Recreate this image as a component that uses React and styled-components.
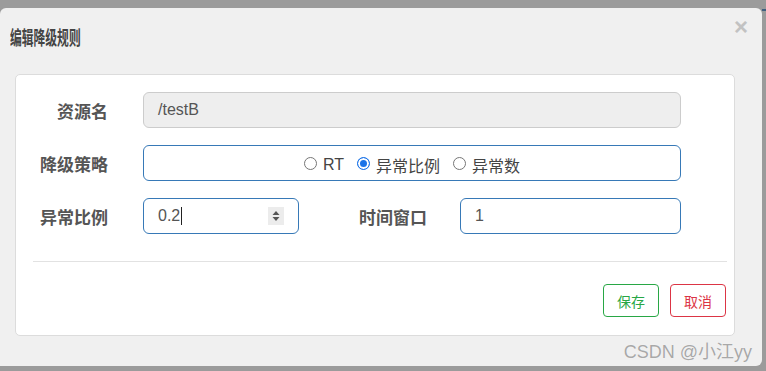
import styled, { createGlobalStyle } from 'styled-components'

const GlobalStyle = createGlobalStyle`
  html, body {
    margin: 0;
    padding: 0;
    background: #9b9b9b;
    overflow: hidden;
    font-family: "Liberation Sans", "Noto Sans CJK SC", sans-serif;
  }
`

const Page = styled.div`
  width: 766px;
  height: 371px;
  padding-top: 8px;
  box-sizing: border-box;
  position: relative;
`

const EdgeLine = styled.div`
  position: absolute;
  right: 0;
  top: 9px;
  width: 4px;
  height: 2px;
  background: #3f5f7f;
`

const Dialog = styled.div`
  width: 762px;
  height: 358px;
  background: #f0f0f0;
  border-radius: 6px 6px 6px 0;
  display: flex;
  flex-direction: column;
  box-sizing: border-box;
`

const Header = styled.div`
  height: 66px;
  display: flex;
  justify-content: space-between;
  align-items: flex-start;
  padding: 18px 14px 0 10px;
  box-sizing: border-box;
`

const Title = styled.h4`
  margin: 0;
  font-size: 19px;
  line-height: 22px;
  font-weight: bold;
  color: #444;
  font-family: "Noto Sans CJK SC", sans-serif;
  transform: scaleX(0.62);
  transform-origin: left center;
  white-space: nowrap;
`

const Close = styled.span`
  margin-top: -11px;
  font-size: 24px;
  line-height: 24px;
  font-weight: bold;
  color: #c2c2c2;
`

const Body = styled.div`
  padding: 0 27px 0 15px;
`

const Panel = styled.div`
  height: 262px;
  box-sizing: border-box;
  background: #fff;
  border: 1px solid #dcdcdc;
  border-radius: 5px;
  padding-top: 17px;
`

const Row = styled.div`
  display: flex;
  align-items: center;
  height: 36px;
  margin-bottom: ${p => p.last ? 0 : 17}px;
`

const Label = styled.label`
  width: ${p => p.w || 92}px;
  margin-right: ${p => p.mr || 35}px;
  margin-left: ${p => p.ml || 0}px;
  text-align: right;
  font-size: 17px;
  font-weight: bold;
  color: #555;
  font-family: "Noto Sans CJK SC", sans-serif;
  flex-shrink: 0;
`

const Field = styled.div`
  width: ${p => p.w}px;
  height: 36px;
  box-sizing: border-box;
  border: 1px solid ${p => p.disabled ? '#cccccc' : '#3779b7'};
  background: ${p => p.disabled ? '#eeeeee' : '#fff'};
  border-radius: 6px;
  display: flex;
  align-items: center;
  justify-content: ${p => p.center ? 'center' : 'flex-start'};
  padding: 0 ${p => p.center ? 0 : 14}px;
  font-size: 16px;
  color: #555;
  flex-shrink: 0;
`

const Value = styled.span`
  flex: 1;
  display: flex;
  align-items: center;
`

const Caret = styled.span`
  display: inline-block;
  width: 1px;
  height: 18px;
  background: #222;
  margin-left: 1px;
`

const Spinner = styled.span`
  width: 16px;
  height: 18px;
  background: #ececec;
  display: flex;
  align-items: center;
  justify-content: center;
`

const RadioGroup = styled.div`
  display: flex;
  align-items: center;
  gap: 13px;
  margin-top: 4px;
`

const RadioItem = styled.span`
  display: flex;
  align-items: center;
  gap: 6px;
  font-size: 16px;
  color: #444;
  font-family: "Liberation Sans", "Noto Sans CJK SC", sans-serif;
`

const Dot = styled.span`
  width: 13px;
  height: 13px;
  box-sizing: border-box;
  border-radius: 50%;
  border: 1px solid ${p => p.checked ? '#1a73e8' : '#767676'};
  background: ${p => p.checked ? '#1a73e8' : '#fff'};
  box-shadow: ${p => p.checked ? 'inset 0 0 0 2px #fff' : 'none'};
  margin-top: -4px;
`

const Divider = styled.div`
  height: 1px;
  background: #e2e2e2;
  margin: 27px 7px 0 17px;
`

const Footer = styled.div`
  display: flex;
  justify-content: flex-end;
  gap: 11px;
  padding: 22px 8px 0 0;
`

const Button = styled.button`
  width: 56px;
  height: 33px;
  border-radius: 4px;
  background: #fff;
  border: 1px solid ${p => p.color};
  color: ${p => p.color};
  font-size: 14px;
  font-family: "Noto Sans CJK SC", sans-serif;
  padding: 0;
`

const Watermark = styled.div`
  position: absolute;
  right: 14px;
  bottom: 8px;
  font-size: 18px;
  color: #a8a8a8;
  font-family: "Liberation Sans", "Noto Sans CJK SC", sans-serif;
  text-shadow: 0 0 1px #fff;
`

const SpinIcon = () => (
  <svg width="8" height="12" viewBox="0 0 8 12">
    <path d="M4 1 L7.5 5 L0.5 5 Z" fill="#555" />
    <path d="M4 11 L7.5 7 L0.5 7 Z" fill="#555" />
  </svg>
)

export default function App() {
  return (
    <>
      <GlobalStyle />
      <Page>
        <EdgeLine />
        <Dialog>
          <Header>
            <Title>编辑降级规则</Title>
            <Close>×</Close>
          </Header>
          <Body>
            <Panel>
              <Row>
                <Label>资源名</Label>
                <Field w={538} disabled>/testB</Field>
              </Row>
              <Row>
                <Label>降级策略</Label>
                <Field w={538} center>
                  <RadioGroup>
                    <RadioItem><Dot />RT</RadioItem>
                    <RadioItem><Dot checked />异常比例</RadioItem>
                    <RadioItem><Dot />异常数</RadioItem>
                  </RadioGroup>
                </Field>
              </Row>
              <Row last>
                <Label>异常比例</Label>
                <Field w={156}>
                  <Value>0.2<Caret /></Value>
                  <Spinner><SpinIcon /></Spinner>
                </Field>
                <Label w={69} ml={59} mr={33}>时间窗口</Label>
                <Field w={221}>1</Field>
              </Row>
              <Divider />
              <Footer>
                <Button color="#28a745">保存</Button>
                <Button color="#dc3545">取消</Button>
              </Footer>
            </Panel>
          </Body>
        </Dialog>
        <Watermark>CSDN @小江yy</Watermark>
      </Page>
    </>
  )
}
